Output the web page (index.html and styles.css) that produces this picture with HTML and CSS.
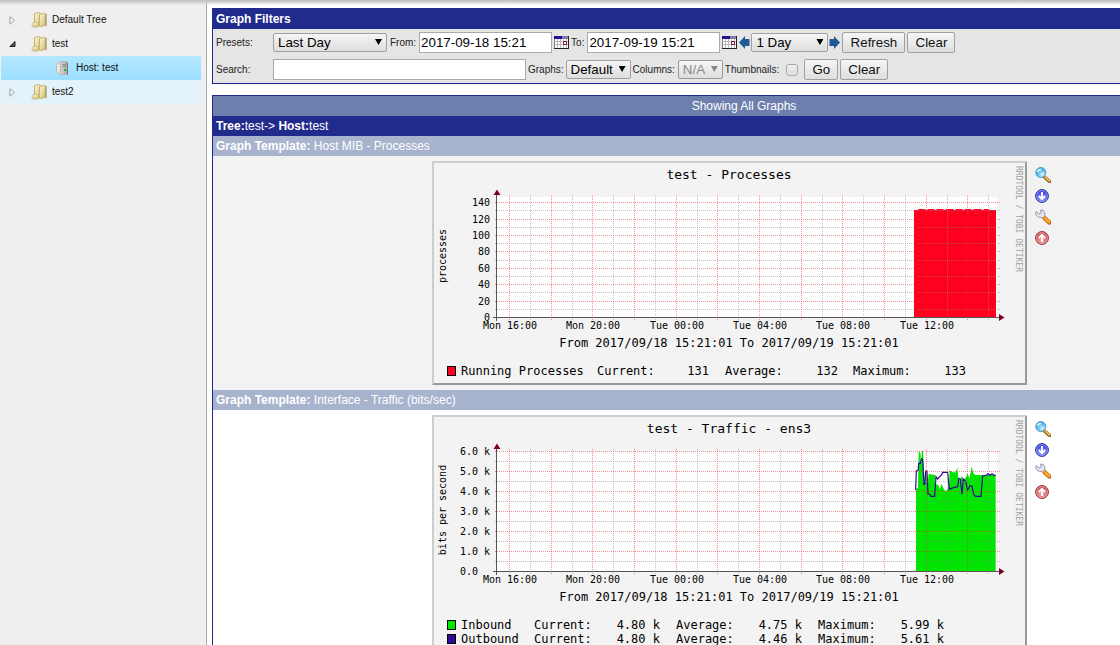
FILE: index.html
```html
<!DOCTYPE html>
<html lang="en">
<head>
<meta charset="utf-8">
<title>Graphs - test</title>
<link rel="stylesheet" href="styles.css">
</head>
<body>
<svg class="defs" aria-hidden="true">
  <defs>
    <linearGradient id="gold" x1="0" x2="1" y1="0" y2="1"><stop offset="0" stop-color="#fffbe0"/><stop offset="1" stop-color="#cdb768"/></linearGradient>
    <linearGradient id="steel" x1="0" x2="1"><stop offset="0" stop-color="#f4f4f4"/><stop offset="1" stop-color="#a5a5a5"/></linearGradient>
    <radialGradient id="lens" cx=".65" cy=".7"><stop offset="0" stop-color="#d8f6ff"/><stop offset="1" stop-color="#4fb5e6"/></radialGradient>
    <radialGradient id="blue" cx=".5" cy=".65"><stop offset="0" stop-color="#9dabff"/><stop offset="1" stop-color="#3a3fe0"/></radialGradient>
    <radialGradient id="red" cx=".5" cy=".65"><stop offset="0" stop-color="#f3b4b4"/><stop offset="1" stop-color="#cc4a52"/></radialGradient>
    <symbol id="folder" viewBox="0 0 16 16">
      <path d="M0 14l4-4v5H1z" fill="#999" opacity=".45"/>
      <path d="M3.500 1.500l5-1 1 1v12l-6 1.500z" fill="url(#gold)" stroke="#c4b273"/>
      <path d="M8.500 2.500l5-1.500 1 1v11.500l-6 1z" fill="url(#gold)" stroke="#c4b273"/>
      <path d="M2 10.500h4l1 1V15H2z" fill="url(#gold)" stroke="#cfc08a"/>
      <path d="M15 2v12" stroke="#9a8955"/>
    </symbol>
    <symbol id="host" viewBox="0 0 12 14">
      <path d="M.5 4.500Q1 1 4.500.5h6l1 1v12h-8Q.5 12 .5 9z" fill="url(#steel)" stroke="#b5b5b5"/>
      <path d="M11.500 1.500V13.500" stroke="#777"/><path d="M4.500 1.500v11" stroke="#bbb"/>
      <path d="M6 3.500h4M6 5.500h4" stroke="#888"/>
      <path d="M8 8h2v2H8z" fill="#20b545"/>
    </symbol>
    <symbol id="closed" viewBox="0 0 7 9"><path d="M1 .8L5.500 4.500 1 8.200z" fill="#fff" stroke="#999"/></symbol>
    <symbol id="open" viewBox="0 0 7 9"><path d="M6 1.500v5H.8z" fill="#555" stroke="#222"/></symbol>
    <symbol id="calendar" viewBox="0 0 15 13">
      <path d="M0 0h15v13H0z" fill="#fff"/>
      <path d="M0 0h8v3H0z" fill="#20108c"/><path d="M8 0h6v3H8z" fill="#7d7da8"/>
      <path d="M1 5.500h13M1 8.500h13M3.500 3v9M6.500 3v9M9.500 3v9M12.500 3v9" stroke="#b9b9b9"/>
      <path d="M0 12.500h15M14.500 0v13" stroke="#222"/><path d="M.5 3v9" stroke="#888"/>
      <path d="M9.500 5.500h3v3h-3z" fill="#fff" stroke="#8c1028"/>
    </symbol>
    <symbol id="left" viewBox="0 0 11 13"><path d="M0 6.500L6 0v3h4.500v7H6v3z" fill="#215b96"/></symbol>
    <symbol id="right" viewBox="0 0 11 13"><path d="M11 6.500L5 0v3H.5v7H5v3z" fill="#215b96"/></symbol>
    <symbol id="magnify" viewBox="0 0 16 16">
      <path d="M9.500 10l5 4.500" stroke="#8b6325" stroke-width="3.500" stroke-linecap="round"/>
      <path d="M10 10l4.500 4" stroke="#e9b44c" stroke-width="1.800" stroke-linecap="round"/>
      <circle cx="5.800" cy="5.500" r="5" fill="url(#lens)" stroke="#4b9ac4"/>
      <path d="M2.500 5Q3 2.500 6 2.500" fill="none" stroke="#e9fbff" stroke-width="1.300"/>
    </symbol>
    <symbol id="down" viewBox="0 0 16 16">
      <circle cx="7" cy="8" r="6.400" fill="url(#blue)" stroke="#2f328e"/>
      <circle cx="7" cy="8" r="5.400" fill="none" stroke="#a9b4ff" stroke-width=".7"/>
      <path d="M7 4v7M3.800 8L7 11.200 10.200 8" fill="none" stroke="#fff" stroke-width="1.800"/>
    </symbol>
    <symbol id="wrench" viewBox="0 0 16 16">
      <path d="M1 2.500L4 5l2-1-.3-3Q9 .5 10 4l-.5 2L12 9 9.500 11.500 7 8.500Q2.500 9 .6 5z" fill="#e2e4ee" stroke="#8c90a0" stroke-width=".9"/>
      <path d="M10 9.500l4.300 4" stroke="#b9670f" stroke-width="4.400" stroke-linecap="round"/>
      <path d="M10 9.300l4 3.800" stroke="#ffa72b" stroke-width="2.800" stroke-linecap="round"/>
    </symbol>
    <symbol id="up" viewBox="0 0 16 16">
      <circle cx="7" cy="8" r="6.400" fill="url(#red)" stroke="#8e3038"/>
      <circle cx="7" cy="8" r="5.400" fill="none" stroke="#f6b8b8" stroke-width=".7"/>
      <path d="M7 12V5M3.800 8L7 4.800 10.200 8" fill="none" stroke="#fff" stroke-width="1.800"/>
    </symbol>
    <g id="time-grid">
      <path class="grid minor" d="M98.500 34v125M140.500 34v125M181.500 34v125M223.500 34v125M265.500 34v125M306.500 34v125M348.500 34v125M390.500 34v125M431.500 34v125M473.500 34v125M515.500 34v125M556.500 34v125"/>
      <path class="grid major" d="M77.500 34v125M119.500 34v125M160.500 34v125M202.500 34v125M244.500 34v125M285.500 34v125M327.500 34v125M369.500 34v125M410.500 34v125M452.500 34v125M494.500 34v125M535.500 34v125"/>
    </g>
    <g id="axes">
      <path class="axis" d="M64.500 33v127M61 156.500h507"/>
      <path d="M61.500 34h7L65 28.500zM567 153v7l5.500-3.500z" fill="#800020"/>
    </g>
  </defs>
</svg>
<div class="app">
  <nav class="sidebar" aria-label="Graph trees">
    <ul class="tree">
      <li><a class="node" href="#default"><svg class="twisty"><use href="#closed"/></svg><svg class="icon"><use href="#folder"/></svg>Default Tree</a></li>
      <li><a class="node" href="#test"><svg class="twisty"><use href="#open"/></svg><svg class="icon"><use href="#folder"/></svg>test</a></li>
      <li><a class="node child selected" href="#host"><svg class="host"><use href="#host"/></svg>Host: test</a></li>
      <li><a class="node hovered" href="#test2"><svg class="twisty"><use href="#closed"/></svg><svg class="icon"><use href="#folder"/></svg>test2</a></li>
    </ul>
  </nav>
  <main class="content">
    <section class="panel filters">
      <h2 class="bar navy">Graph Filters</h2>
      <form>
        <div class="row">
          <label class="first" for="presets">Presets:</label>
          <span class="select preset"><select id="presets"><option>Last Day</option></select></span>
          <label for="from">From:</label>
          <input class="text date" id="from" type="text" value="2017-09-18 15:21">
          <button class="plain" type="button" aria-label="Start date"><svg class="cal"><use href="#calendar"/></svg></button>
          <label for="to">To:</label>
          <input class="text date" id="to" type="text" value="2017-09-19 15:21">
          <button class="plain" type="button" aria-label="End date"><svg class="cal"><use href="#calendar"/></svg></button>
          <div class="shift">
            <button class="plain" type="button" aria-label="Shift back"><svg class="arrow"><use href="#left"/></svg></button>
            <span class="select span"><select aria-label="Time span"><option>1 Day</option></select></span>
            <button class="plain" type="button" aria-label="Shift forward"><svg class="arrow"><use href="#right"/></svg></button>
          </div>
          <button class="button wide" type="button">Refresh</button>
          <button class="button" type="button">Clear</button>
        </div>
        <div class="row">
          <label class="first" for="search">Search:</label>
          <input class="text search" id="search" type="text">
          <label for="graphs">Graphs:</label>
          <span class="select graphs"><select id="graphs"><option>Default</option></select></span>
          <label for="columns">Columns:</label>
          <span class="select columns disabled"><select id="columns" disabled><option>N/A</option></select></span>
          <label for="thumbs">Thumbnails:</label>
          <input class="check" id="thumbs" type="checkbox">
          <button class="button go" type="button">Go</button>
          <button class="button" type="button">Clear</button>
        </div>
      </form>
    </section>

    <section class="panel">
      <div class="bar slate">Showing All Graphs</div>
      <div class="bar navy"><b>Tree:</b>test-&gt; <b>Host:</b>test</div>
      <div class="bar pale"><b>Graph Template:</b> Host MIB - Processes</div>
      <div class="graph-row shaded">
        <svg class="graph" width="595" height="224" viewBox="0 0 595 224" role="img" aria-label="test - Processes">
          <rect class="frame" width="595" height="224"/>
          <path class="edge-light" d="M0 224V0h595l-2 2H2v220z"/><path class="edge-dark" d="M595 0v224H0l2-2h591V2z"/>
          <rect x="65" y="36" width="500" height="120" fill="#fff"/>
          <path d="M482 156V49h3l2-1h6l1 1h1l1-1h6l1 1h1l1-1h6l1 1h1l1-1h7l1 1h1l1-1h6l1 1h1l1-1h6l1 1h1l1-1h7l1 1h1l1-1h4l2 1H564V156z" fill="#ff001f"/>
          <use href="#time-grid"/>
          <path class="grid minor" d="M63 49.500h505M63 66.500h505M63 82.500h505M63 99.500h505M63 115.500h505M63 131.500h505M63 148.500h505"/>
          <path class="grid major" d="M63 41.500h505M63 58.500h505M63 74.500h505M63 90.500h505M63 107.500h505M63 123.500h505M63 140.500h505"/>
          <use href="#axes"/>
          <text class="title" x="297" y="18">test - Processes</text>
          <g class="tick end"><text x="58" y="45">140</text><text x="58" y="62">120</text><text x="58" y="78">100</text><text x="58" y="94">80</text><text x="58" y="111">60</text><text x="58" y="127">40</text><text x="58" y="144">20</text><text x="58" y="160">0</text></g>
          <g class="tick mid"><text x="78" y="168">Mon 16:00</text><text x="161" y="168">Mon 20:00</text><text x="245" y="168">Tue 00:00</text><text x="328" y="168">Tue 04:00</text><text x="411" y="168">Tue 08:00</text><text x="495" y="168">Tue 12:00</text></g>
          <text class="unit" transform="translate(14 95) rotate(-90)">processes</text>
          <text class="brand" transform="translate(584 5) rotate(90)">RRDTOOL / TOBI OETIKER</text>
          <text class="legend mid" x="297" y="186">From 2017/09/18 15:21:01 To 2017/09/19 15:21:01</text>
          <rect class="key" x="15.500" y="205.500" width="8" height="9" fill="#ff001f"/>
          <g class="legend"><text x="29" y="214">Running Processes</text><text x="165" y="214">Current:</text><text x="293" y="214">Average:</text><text x="421" y="214">Maximum:</text></g>
          <g class="legend end"><text x="277" y="214">131</text><text x="406" y="214">132</text><text x="534" y="214">133</text></g>
        </svg>
        <div class="tools">
          <a href="#zoom1" aria-label="Zoom graph"><svg class="icon"><use href="#magnify"/></svg></a>
          <a href="#csv1" aria-label="Export CSV"><svg class="icon"><use href="#down"/></svg></a>
          <a href="#edit1" aria-label="Graph properties"><svg class="icon"><use href="#wrench"/></svg></a>
          <a href="#top1" aria-label="Page top"><svg class="icon"><use href="#up"/></svg></a>
        </div>
      </div>
      <div class="bar pale"><b>Graph Template:</b> Interface - Traffic (bits/sec)</div>
      <div class="graph-row">
        <svg class="graph" width="595" height="238" viewBox="0 0 595 238" role="img" aria-label="test - Traffic - ens3">
          <rect class="frame" width="595" height="238"/>
          <path class="edge-light" d="M0 238V0h595l-2 2H2v234z"/><path class="edge-dark" d="M595 0v238H0l2-2h591V2z"/>
          <rect x="65" y="36" width="500" height="120" fill="#fdfdfd"/>
          <g transform="translate(293 -30) scale(.3333)">
            <path d="M573 558V313L579 308 581 200 586 202 588 230 591 198 594 198 597 260 600 300 604 258 607 312 611 267 630 270 632 297 640 300 645 312 650 296 655 310 662 320 668 312 672 300 674 255 683 262 692 262 697 248 700 280 706 290 710 272 716 285 722 278 728 265 733 282 737 262 740 243 745 265 752 270H812V558z" fill="#00e600"/>
            <path d="M572 315L574 258 580 255 581 235 586 235 590 222 593 224 597 298 600 297 602 258 606 258 609 327 614 327 618 334H629L633 275 638 282 644 275 650 270 653 262H668L673 313 685 308 698 305 702 280 706 282 711 328 715 282 722 290 728 315 735 302 741 304 746 328 752 334H768L773 273 785 270 790 266 795 271 801 266 807 271H812" fill="none" stroke="#2a0a94" stroke-width="3.600"/>
          </g>
          <use href="#time-grid"/>
          <path class="grid minor" d="M63 46.500h505M63 66.500h505M63 86.500h505M63 106.500h505M63 126.500h505M63 146.500h505"/>
          <path class="grid major" d="M63 36.500h505M63 56.500h505M63 76.500h505M63 96.500h505M63 116.500h505M63 136.500h505"/>
          <use href="#axes"/>
          <text class="title" x="297" y="18">test - Traffic - ens3</text>
          <g class="tick"><text x="28" y="40">6.0 k</text><text x="28" y="60">5.0 k</text><text x="28" y="80">4.0 k</text><text x="28" y="100">3.0 k</text><text x="28" y="120">2.0 k</text><text x="28" y="140">1.0 k</text><text x="28" y="160">0.0</text></g>
          <g class="tick mid"><text x="78" y="168">Mon 16:00</text><text x="161" y="168">Mon 20:00</text><text x="245" y="168">Tue 00:00</text><text x="328" y="168">Tue 04:00</text><text x="411" y="168">Tue 08:00</text><text x="495" y="168">Tue 12:00</text></g>
          <text class="unit" transform="translate(14 95) rotate(-90)">bits per second</text>
          <text class="brand" transform="translate(584 5) rotate(90)">RRDTOOL / TOBI OETIKER</text>
          <text class="legend mid" x="297" y="186">From 2017/09/18 15:21:01 To 2017/09/19 15:21:01</text>
          <rect class="key" x="15.500" y="205.500" width="8" height="9" fill="#00e600"/>
          <rect class="key" x="15.500" y="219.500" width="8" height="9" fill="#2f0a94"/>
          <g class="legend"><text x="29" y="214">Inbound</text><text x="102" y="214">Current:</text><text x="244" y="214">Average:</text><text x="386" y="214">Maximum:</text><text x="29" y="228">Outbound</text><text x="102" y="228">Current:</text><text x="244" y="228">Average:</text><text x="386" y="228">Maximum:</text></g>
          <g class="legend end"><text x="228" y="214">4.80 k</text><text x="370" y="214">4.75 k</text><text x="512" y="214">5.99 k</text><text x="228" y="228">4.80 k</text><text x="370" y="228">4.46 k</text><text x="512" y="228">5.61 k</text></g>
        </svg>
        <div class="tools">
          <a href="#zoom2" aria-label="Zoom graph"><svg class="icon"><use href="#magnify"/></svg></a>
          <a href="#csv2" aria-label="Export CSV"><svg class="icon"><use href="#down"/></svg></a>
          <a href="#edit2" aria-label="Graph properties"><svg class="icon"><use href="#wrench"/></svg></a>
          <a href="#top2" aria-label="Page top"><svg class="icon"><use href="#up"/></svg></a>
        </div>
      </div>
    </section>
  </main>
</div>
</body>
</html>
```
FILE: styles.css
```css
* { box-sizing: border-box; }
body {
  margin: 0;
  overflow: hidden;
  background: #fff;
  color: #222;
  font: 10px/12px "Liberation Sans", Arial, sans-serif;
}
svg { display: block; flex: none; }
.defs { position: absolute; width: 0; height: 0; }
.app { display: flex; height: 100vh; background: #fff; }
.app::before {
  content: "";
  position: absolute;
  inset: 0 0 auto;
  height: 5px;
  background: linear-gradient(#c4c4c4 20%, rgba(220, 220, 220, 0));
}

/* Tree */
.sidebar {
  flex: none;
  width: 207px;
  padding: 8px 5px 0 1px;
  background: #efefef;
  border-right: 1px solid #aaa;
}
.tree { margin: 0; padding: 0; list-style: none; }
.node {
  display: flex;
  align-items: center;
  height: 24px;
  padding-left: 8px;
  color: #111;
  text-decoration: none;
}
.twisty { width: 7px; height: 9px; margin-right: 15px; }
.icon { width: 16px; height: 16px; }
.node .icon { margin-right: 5px; }
.node.child { padding-left: 55px; }
.host { width: 12px; height: 14px; margin-right: 8px; }
.selected { background: linear-gradient(#b4e8ff, #9cdfff); }
.hovered { background: #e4f3f9; }

/* Panels; the graph list runs past the right edge of the window */
.content { flex: 1; min-width: 0; padding: 8px 0 0 5px; overflow: hidden; }
.panel { margin-right: -156px; border: 1px solid #212889; }
.filters { margin-bottom: 11px; background: #e5e5e5; }
.bar {
  margin: 0;
  padding: 0 3px;
  color: #fff;
  font-size: 12px;
  line-height: 20px;
}
.navy { background: #212b8c; }
.slate { background: #6d80ad; text-align: center; }
.pale { background: #a8b3cd; }

/* Filter form */
.row { display: flex; align-items: center; gap: 2px; height: 27px; padding-left: 3px; }
.first { width: 55px; }
.select { position: relative; display: flex; height: 19px; }
.select::after {
  content: "";
  position: absolute;
  right: 5px;
  top: 6px;
  width: 7px;
  height: 6px;
  background: #000;
  clip-path: polygon(0 0, 100% 0, 50% 100%);
  pointer-events: none;
}
.select select {
  appearance: none;
  width: 100%;
  padding: 0 4px;
  border: 1px solid #a0a0a0;
  border-radius: 2px;
  background: linear-gradient(#f5f5f5, #dedede);
  color: #000;
  font-family: inherit;
}
.disabled select { border-color: #999; color: #888; opacity: 1; }
.disabled::after { background: #888; }
.preset { width: 114px; margin-right: 1px; }
.span { width: 77px; }
.graphs { width: 65px; }
.columns { width: 45px; margin-left: 1px; }
.text {
  height: 21px;
  padding: 0 1px;
  border: 1px solid #a9a9a9;
  background: #fff;
  color: #000;
  font-family: inherit;
}
.date { width: 133px; margin-left: 1px; }
.search { width: 253px; }
.shift { display: flex; align-items: center; gap: 1px; }
.plain { padding: 0; border: 0; background: none; }
.cal { width: 15px; height: 13px; }
.arrow { width: 11px; height: 13px; }
.button {
  width: 48px;
  height: 21px;
  padding: 0;
  border: 1px solid #a0a0a0;
  border-radius: 2px;
  background: linear-gradient(#f6f6f6, #dedede);
  color: #111;
  font-family: inherit;
}
.wide { width: 63px; }
.go { width: 34px; }
.check {
  appearance: none;
  width: 12px;
  height: 12px;
  margin: 0 4px 0 5px;
  border: 1px solid #a8a8a8;
  border-radius: 3px;
  background: linear-gradient(#f0f0f0, #dedede);
}

/* Graphs */
.graph-row { display: flex; justify-content: center; gap: 8px; padding: 5px; background: #fff; }
.shaded { background: #f2f2f2; }
.tools { display: flex; flex-direction: column; gap: 5px; padding: 6px 5px 0 0; }
.graph { font-family: "DejaVu Sans Mono", monospace; }
.frame { fill: #f3f3f3; }
.edge-light { fill: #cdcdcd; }
.edge-dark { fill: #999; }
.grid { fill: none; stroke-dasharray: 1 1; }
.minor { stroke: rgba(140, 140, 140, .5); }
.major { stroke: rgba(240, 30, 50, .5); }
.axis { stroke: #555; fill: none; }
.title { font-size: 13px; text-anchor: middle; }
.tick { font-size: 10px; }
.legend { font-size: 12px; }
.unit { font-size: 10px; text-anchor: middle; }
.brand { font-size: 8px; fill: #a0a0a0; }
.end { text-anchor: end; }
.mid { text-anchor: middle; }
.key { stroke: #000; }
```
